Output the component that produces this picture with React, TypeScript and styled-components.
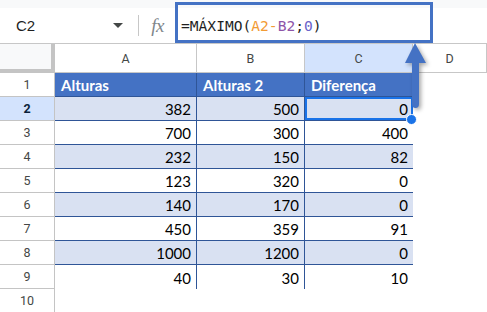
import React from 'react';
import styled, { createGlobalStyle } from 'styled-components';

const GlobalStyle = createGlobalStyle`
  html, body {
    margin: 0;
    padding: 0;
    background: #ffffff;
  }
`;

const Page = styled.div`
  position: relative;
  width: 487px;
  height: 312px;
  overflow: hidden;
  background: #ffffff;
  font-family: Roboto, 'Liberation Sans', sans-serif;
`;

const FormulaBar = styled.div`
  display: flex;
  align-items: center;
  height: 44px;
  box-sizing: border-box;
  border-top: 8px solid #f8f9fa;
  border-bottom: 1px solid #c7c7c7;
`;

const NameBox = styled.div`
  display: flex;
  align-items: center;
  justify-content: space-between;
  width: 138px;
  padding: 0 15px 0 16px;
  box-sizing: border-box;
  font-family: 'Liberation Sans', Arial, sans-serif;
  font-size: 15px;
  color: #1f1f1f;
`;

const Caret = styled.span`
  width: 0;
  height: 0;
  border-left: 5px solid transparent;
  border-right: 5px solid transparent;
  border-top: 5px solid #444746;
`;

const Divider = styled.div`
  width: 1px;
  height: 21px;
  background: #c7c7c7;
`;

const Fx = styled.div`
  width: 37px;
  text-align: center;
  font-family: 'Liberation Serif', serif;
  font-style: italic;
  font-size: 19px;
  color: #80868b;
  letter-spacing: -0.5px;
`;

const Formula = styled.div`
  padding-left: 5px;
  font-family: 'DejaVu Sans Mono', 'Liberation Mono', monospace;
  font-size: 14.6px;
  color: #1f1f1f;
`;

const Token = styled.span<{ $color: string }>`
  color: ${(p) => p.$color};
`;

const FormulaHighlight = styled.div`
  position: absolute;
  left: 175px;
  top: 2px;
  width: 258px;
  height: 41px;
  box-sizing: border-box;
  border: 3px solid #4472c4;
  pointer-events: none;
`;

const Sheet = styled.div`
  display: grid;
  grid-template-columns: 55px 142px 108px 108px 1fr;
  grid-template-rows: 29px repeat(10, 24px);
`;

const Corner = styled.div`
  background: #f8f9fa;
  border-right: 4px solid #c4c4c4;
  border-bottom: 4px solid #c4c4c4;
  box-sizing: border-box;
`;

const ColHeader = styled.div<{ $active?: boolean }>`
  display: flex;
  align-items: center;
  justify-content: center;
  background: ${(p) => (p.$active ? '#d3e3fd' : '#ffffff')};
  border-right: 1px solid #c7c7c7;
  border-bottom: 1px solid #c7c7c7;
  box-sizing: border-box;
  font-size: 12.5px;
  color: #444746;
`;

const RowHeader = styled.div<{ $active?: boolean }>`
  display: flex;
  align-items: center;
  justify-content: center;
  background: ${(p) => (p.$active ? '#d3e3fd' : '#ffffff')};
  border-right: 1px solid #c4c4c4;
  border-bottom: 1px solid #c4c4c4;
  box-sizing: border-box;
  font-size: 12.5px;
  font-weight: ${(p) => (p.$active ? 700 : 400)};
  color: ${(p) => (p.$active ? '#0b1f3a' : '#444746')};
`;

const Cell = styled.div<{
  $fill: string;
  $right?: boolean;
  $bottom?: boolean;
  $head?: boolean;
  $selected?: boolean;
}>`
  position: relative;
  display: flex;
  align-items: flex-end;
  justify-content: ${(p) => (p.$head ? 'flex-start' : 'flex-end')};
  padding: 0 5px 2px 6px;
  box-sizing: border-box;
  background: ${(p) => p.$fill};
  border-right: ${(p) => (p.$right ? '1px solid #2f5597' : 'none')};
  border-bottom: ${(p) => (p.$bottom ? '1px solid #2f5597' : 'none')};
  font-family: Lato, 'Open Sans', sans-serif;
  font-size: 15px;
  line-height: 18px;
  font-weight: ${(p) => (p.$head ? 700 : 400)};
  color: ${(p) => (p.$head ? '#ffffff' : '#000000')};
  ${(p) =>
    p.$selected &&
    `
    box-shadow: inset 0 0 0 2px #1a73e8;
    &::after {
      content: '';
      position: absolute;
      right: -4px;
      bottom: -5px;
      width: 9px;
      height: 9px;
      border-radius: 50%;
      background: #1a73e8;
      border: 1px solid #ffffff;
      z-index: 2;
    }
  `}
`;

const Blank = styled.div`
  background: #ffffff;
`;

const Arrow = styled.svg`
  position: absolute;
  left: 400px;
  top: 40px;
  overflow: visible;
  filter: drop-shadow(2px 2px 2px rgba(0, 0, 0, 0.35));
  z-index: 3;
`;

const rows: number[][] = [
  [382, 500, 0],
  [700, 300, 400],
  [232, 150, 82],
  [123, 320, 0],
  [140, 170, 0],
  [450, 359, 91],
  [1000, 1200, 0],
  [40, 30, 10],
];

const headers = ['Alturas', 'Alturas 2', 'Diferença'];

const App: React.FC = () => (
  <Page>
    <GlobalStyle />
    <FormulaBar>
      <NameBox>
        C2
        <Caret />
      </NameBox>
      <Divider />
      <Fx>fx</Fx>
      <Formula>
        =MÁXIMO(<Token $color="#f29b34">A2-</Token>
        <Token $color="#8e55a8">B2</Token>;<Token $color="#6b63c9">0</Token>)
      </Formula>
    </FormulaBar>
    <FormulaHighlight />

    <Sheet>
      <Corner />
      {['A', 'B', 'C', 'D'].map((c) => (
        <ColHeader key={c} $active={c === 'C'}>
          {c}
        </ColHeader>
      ))}

      <RowHeader>1</RowHeader>
      {headers.map((h, i) => (
        <Cell key={h} $fill="#4472c4" $head $right={i < 2} $bottom>
          {h}
        </Cell>
      ))}
      <Blank />

      {rows.map((r, ri) => (
        <React.Fragment key={ri}>
          <RowHeader $active={ri === 0}>{ri + 2}</RowHeader>
          {r.map((v, ci) => (
            <Cell
              key={ci}
              $fill={ri % 2 === 0 ? '#d9e1f2' : '#ffffff'}
              $right={ci < 2}
              $bottom={ri < rows.length - 1}
              $selected={ri === 0 && ci === 2}
            >
              {v}
            </Cell>
          ))}
          <Blank />
        </React.Fragment>
      ))}

      <RowHeader>10</RowHeader>
      <Blank />
      <Blank />
      <Blank />
      <Blank />
    </Sheet>

    <Arrow width="32" height="72" viewBox="0 0 32 72">
      <path d="M15 3 L26 23 L19 23 L19 64 Q19 68 15.5 68 Q12 68 12 64 L12 23 L5 23 Z" fill="#4472c4" />
    </Arrow>
  </Page>
);

export default App;
